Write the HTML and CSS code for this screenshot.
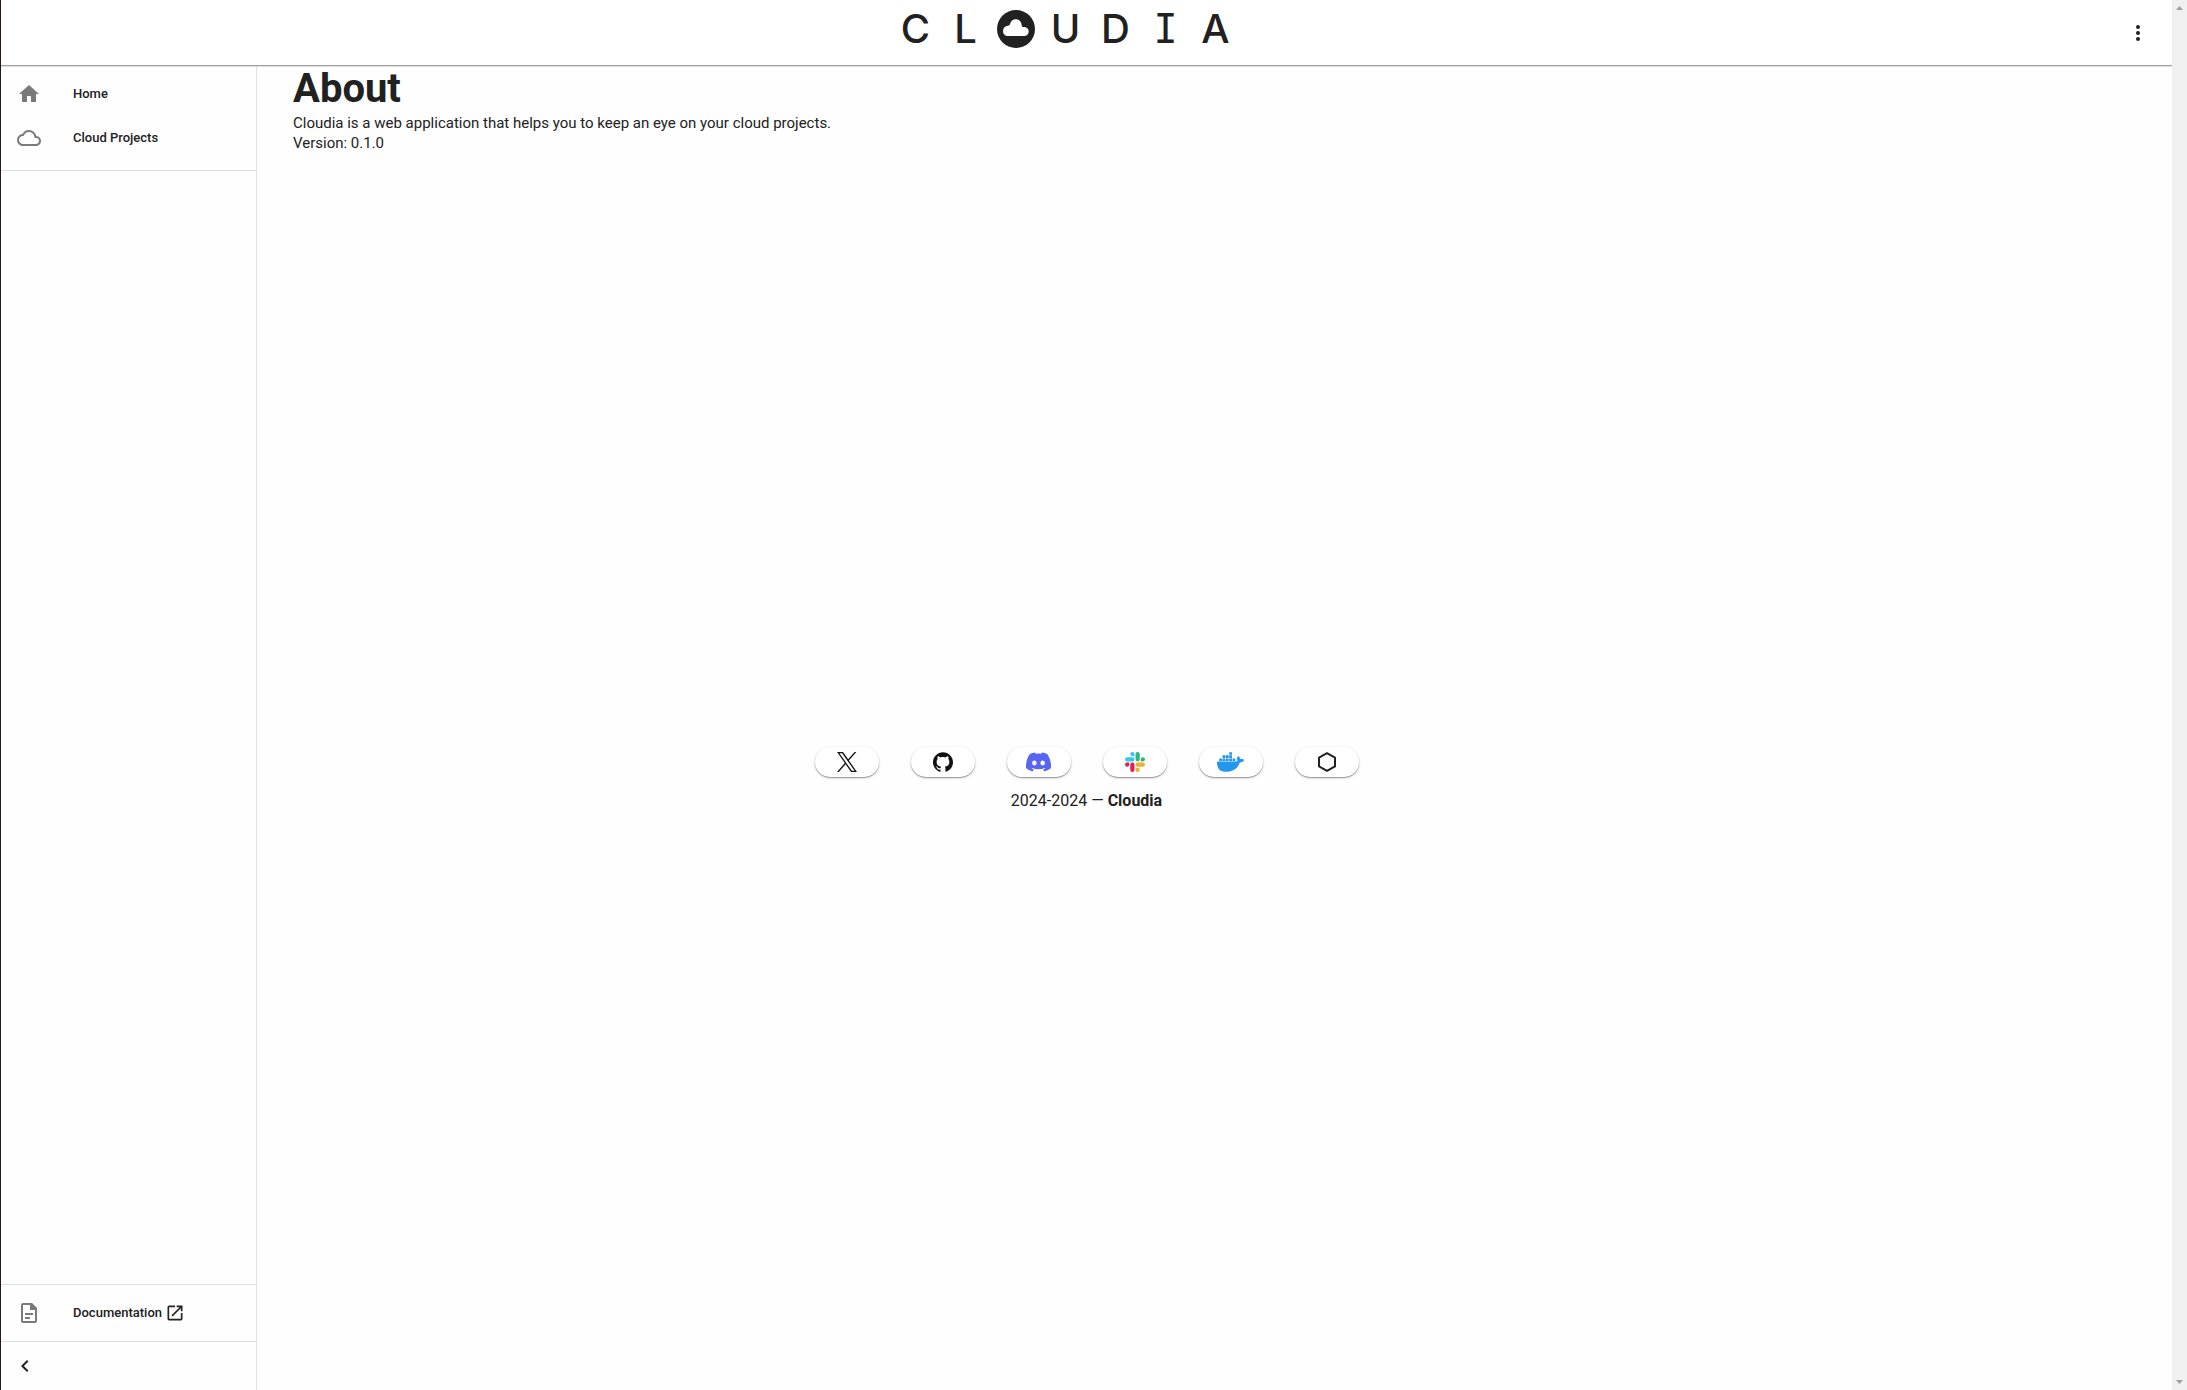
FILE: index.html
```html
<!DOCTYPE html>
<html lang="en">
<head>
<meta charset="utf-8">
<meta name="viewport" content="width=device-width, initial-scale=1">
<title>Cloudia - About</title>
<link rel="stylesheet" href="styles.css">
</head>
<body>
<div class="window">
  <div class="app">
    <header class="topbar">
      <a class="logo" href="#" aria-label="Cloudia">
        <span>C</span><span>L</span>
        <svg class="logo-cloud" viewBox="0 0 38 38" aria-hidden="true"><circle cx="19" cy="19" r="19" fill="#212121"/><path d="M10.500 26a4.800 4.800 0 0 1-4.500-5c0-3 2-5 5.500-5.500 1-.2 1.300-.6 1.500-1.500.8-3 3-4.800 5.700-4.800 3.300 0 5.800 2.400 6.100 6.300 0 1 .4 1.500 1.500 1.500 3.300 0 5.400 1.700 5.400 4.500 0 2.600-2 4.500-4.500 4.500z" fill="#fff"/></svg>
        <span>U</span><span>D</span><span class="logo-serif">I</span><span>A</span>
      </a>
      <button class="icon-button" type="button" aria-label="Menu">
        <svg viewBox="0 0 24 24" aria-hidden="true"><path d="M12 16a2 2 0 1 1 0 4 2 2 0 0 1 0-4m0-6a2 2 0 1 1 0 4 2 2 0 0 1 0-4m0-6a2 2 0 1 1 0 4 2 2 0 0 1 0-4"/></svg>
      </button>
    </header>

    <nav class="sidebar" aria-label="Main">
      <ul class="nav-list nav-main">
        <li><a class="nav-item" href="#"><svg class="nav-icon" viewBox="0 0 24 24" aria-hidden="true"><path d="M10 20v-6h4v6h5v-8h3L12 3 2 12h3v8z"/></svg><span>Home</span></a></li>
        <li><a class="nav-item" href="#"><svg class="nav-icon" viewBox="0 0 24 24" aria-hidden="true"><path d="M19.350 10.040A7.490 7.490 0 0 0 12 4C9.110 4 6.600 5.640 5.350 8.040A5.994 5.994 0 0 0 0 14c0 3.310 2.690 6 6 6h13c2.760 0 5-2.240 5-5 0-2.640-2.050-4.780-4.650-4.960M19 18H6c-2.210 0-4-1.790-4-4 0-2.050 1.530-3.760 3.560-3.970l1.070-.110.500-.950A5.469 5.469 0 0 1 12 6c2.620 0 4.880 1.860 5.390 4.430l.300 1.500 1.530.110A2.980 2.980 0 0 1 22 15c0 1.650-1.350 3-3 3"/></svg><span>Cloud Projects</span></a></li>
      </ul>
      <ul class="nav-list nav-docs">
        <li><a class="nav-item" href="#"><svg class="nav-icon" viewBox="0 0 24 24" aria-hidden="true"><path fill-rule="evenodd" d="M6 2h9l5 5v13a2 2 0 0 1-2 2H6a2 2 0 0 1-2-2V4a2 2 0 0 1 2-2zm0 2v16h12V9h-5V4zM8 12h8v2H8zm0 4h5v2H8z"/></svg><span>Documentation</span><svg class="external" viewBox="0 0 24 24" aria-hidden="true"><path d="M14 3v2h3.590l-9.830 9.830 1.410 1.410L19 6.410V10h2V3m-2 16H5V5h7V3H5a2 2 0 0 0-2 2v14a2 2 0 0 0 2 2h14a2 2 0 0 0 2-2v-7h-2z"/></svg></a></li>
      </ul>
      <div class="collapse">
        <button class="icon-button" type="button" aria-label="Collapse sidebar">
          <svg viewBox="0 0 24 24" aria-hidden="true"><path d="M15.410 16.580 10.830 12l4.580-4.590L14 6l-6 6 6 6z"/></svg>
        </button>
      </div>
    </nav>

    <main class="content">
      <h1>About</h1>
      <p>Cloudia is a web application that helps you to keep an eye on your cloud projects.</p>
      <p>Version: 0.1.0</p>
    </main>

    <footer class="footer">
      <div class="links">
        <a class="pill" href="#" aria-label="X"><svg viewBox="1 1 22 22" width="20" height="20" aria-hidden="true"><path d="M14.095 10.316 22.286 1h-1.940l-7.116 8.088L7.551 1H1l8.589 12.231L1 23h1.941l7.509-8.543L16.449 23H23zm-2.658 3.022-.872-1.218-6.925-9.688h2.982l5.590 7.821.868 1.219 7.265 10.166h-2.982z"/></svg></a>
        <a class="pill" href="#" aria-label="GitHub"><svg viewBox="0 0 24 24" width="20" height="20" aria-hidden="true"><path d="M12 .297c-6.630 0-12 5.373-12 12 0 5.303 3.438 9.800 8.205 11.385.6.113.82-.258.82-.577 0-.285-.01-1.040-.015-2.040-3.338.724-4.042-1.610-4.042-1.610C4.422 18.070 3.633 17.700 3.633 17.700c-1.087-.744.084-.729.084-.729 1.205.084 1.838 1.236 1.838 1.236 1.070 1.835 2.809 1.305 3.495.998.108-.776.417-1.305.76-1.605-2.665-.3-5.466-1.332-5.466-5.930 0-1.310.465-2.380 1.235-3.220-.135-.303-.54-1.523.105-3.176 0 0 1.005-.322 3.300 1.230.96-.267 1.980-.399 3-.405 1.020.006 2.040.138 3 .405 2.280-1.552 3.285-1.230 3.285-1.230.645 1.653.24 2.873.12 3.176.765.84 1.230 1.910 1.230 3.220 0 4.610-2.805 5.625-5.475 5.920.42.36.81 1.096.81 2.220 0 1.606-.015 2.896-.015 3.286 0 .315.21.69.825.57C20.565 22.092 24 17.592 24 12.297c0-6.627-5.373-12-12-12"/></svg></a>
        <a class="pill discord" href="#" aria-label="Discord"><svg viewBox="0 2.800 24 18.400" width="25" height="20" aria-hidden="true"><path d="M20.317 4.370a19.791 19.791 0 0 0-4.885-1.515.074.074 0 0 0-.079.037c-.211.375-.445.865-.608 1.249-1.845-.276-3.680-.276-5.487 0-.164-.393-.406-.874-.618-1.249a.077.077 0 0 0-.078-.037 19.736 19.736 0 0 0-4.885 1.515.070.070 0 0 0-.032.028C.533 9.046-.319 13.580.099 18.058a.082.082 0 0 0 .031.056c2.053 1.508 4.041 2.423 5.993 3.029a.078.078 0 0 0 .084-.028c.462-.630.873-1.295 1.226-1.994a.076.076 0 0 0-.042-.106c-.653-.248-1.274-.550-1.872-.892a.077.077 0 0 1-.008-.128c.126-.094.252-.192.372-.291a.074.074 0 0 1 .078-.010c3.928 1.793 8.180 1.793 12.061 0a.074.074 0 0 1 .079.009c.120.099.246.198.373.292a.077.077 0 0 1-.007.128 12.299 12.299 0 0 1-1.873.891.077.077 0 0 0-.041.107c.360.698.772 1.363 1.225 1.993a.076.076 0 0 0 .084.029c1.961-.607 3.950-1.522 6.002-3.029a.077.077 0 0 0 .031-.055c.500-5.177-.838-9.674-3.549-13.660a.061.061 0 0 0-.031-.029zM8.020 15.331c-1.183 0-2.157-1.086-2.157-2.419 0-1.333.956-2.419 2.157-2.419 1.211 0 2.176 1.095 2.157 2.419 0 1.333-.956 2.419-2.157 2.419zm7.975 0c-1.183 0-2.157-1.086-2.157-2.419 0-1.333.955-2.419 2.157-2.419 1.211 0 2.176 1.095 2.157 2.419 0 1.333-.946 2.419-2.157 2.419z"/></svg></a>
        <a class="pill" href="#" aria-label="Slack"><svg viewBox="0 0 24 24" width="20" height="20" aria-hidden="true"><path fill="#e01e5a" d="M5.042 15.165a2.528 2.528 0 0 1-2.520 2.523A2.528 2.528 0 0 1 0 15.165a2.527 2.527 0 0 1 2.522-2.520h2.520zm1.271 0a2.527 2.527 0 0 1 2.521-2.520 2.527 2.527 0 0 1 2.521 2.520v6.313A2.528 2.528 0 0 1 8.834 24a2.528 2.528 0 0 1-2.521-2.522z"/><path fill="#36c5f0" d="M8.834 5.042a2.528 2.528 0 0 1-2.521-2.520A2.528 2.528 0 0 1 8.834 0a2.528 2.528 0 0 1 2.521 2.522v2.520zm0 1.271a2.528 2.528 0 0 1 2.521 2.521 2.528 2.528 0 0 1-2.521 2.521H2.522A2.528 2.528 0 0 1 0 8.834a2.528 2.528 0 0 1 2.522-2.521z"/><path fill="#2eb67d" d="M18.956 8.834a2.528 2.528 0 0 1 2.522-2.521A2.528 2.528 0 0 1 24 8.834a2.528 2.528 0 0 1-2.522 2.521h-2.522zm-1.268 0a2.528 2.528 0 0 1-2.523 2.521 2.527 2.527 0 0 1-2.520-2.521V2.522A2.527 2.527 0 0 1 15.165 0a2.528 2.528 0 0 1 2.523 2.522z"/><path fill="#ecb22e" d="M15.165 18.956a2.528 2.528 0 0 1 2.523 2.522A2.528 2.528 0 0 1 15.165 24a2.527 2.527 0 0 1-2.520-2.522v-2.522zm0-1.268a2.527 2.527 0 0 1-2.520-2.523 2.526 2.526 0 0 1 2.520-2.520h6.313A2.527 2.527 0 0 1 24 15.165a2.528 2.528 0 0 1-2.522 2.523z"/></svg></a>
        <a class="pill docker" href="#" aria-label="Docker"><svg viewBox="0 3.300 24 17.400" width="27" height="20" aria-hidden="true"><path d="M13.800 8.820h2.490v2.260H13.800zM10.840 3.390h2.490v2.260h-2.490zM10.840 6.100h2.490v2.260h-2.490zM7.910 6.100h2.490v2.260H7.910zM4.950 6.100h2.490v2.260H4.950zM10.840 8.820h2.490v2.260h-2.490zM7.910 8.820h2.490v2.260H7.910zM4.950 8.820h2.490v2.260H4.950zM2.030 8.820h2.490v2.260H2.030zM23.763 9.890c-.065-.051-.672-.51-1.954-.51-.338.001-.676.03-1.010.087-.248-1.700-1.653-2.530-1.716-2.566l-.344-.199-.226.327c-.284.438-.49.922-.612 1.430-.23.97-.09 1.882.403 2.661-.595.332-1.550.413-1.744.42H.751a.751.751 0 0 0-.75.748 11.376 11.376 0 0 0 .692 4.062c.545 1.428 1.355 2.480 2.410 3.124 1.180.723 3.100 1.137 5.275 1.137.983.003 1.963-.086 2.930-.266a12.248 12.248 0 0 0 3.823-1.389c.98-.567 1.860-1.288 2.610-2.136 1.252-1.418 1.998-2.997 2.553-4.400h.221c1.372 0 2.215-.549 2.680-1.009.309-.293.55-.65.707-1.046l.098-.288z"/></svg></a>
        <a class="pill" href="#" aria-label="Packages"><svg viewBox="0 0 20 20" width="20" height="20" aria-hidden="true"><path d="M10 1.200 18 5.600v8.800l-8 4.400-8-4.400V5.600z" fill="none" stroke="#212121" stroke-width="2" stroke-linejoin="round"/></svg></a>
      </div>
      <div class="copyright">2024-2024 — <strong>Cloudia</strong></div>
    </footer>
  </div>
  <div class="scroll-track" aria-hidden="true">
    <svg viewBox="0 0 7 4" width="7" height="4"><path d="M0 4 3.500 0 7 4z"/></svg>
    <svg viewBox="0 0 7 4" width="7" height="4"><path d="M0 0h7L3.500 4z"/></svg>
  </div>
</div>
</body>
</html>
```
FILE: styles.css
```css
* {
  box-sizing: border-box;
}

body {
  margin: 0;
  background: #fefefe;
  color: #212121;
  font: 16px/24px Roboto, sans-serif;
}

a {
  color: inherit;
  text-decoration: none;
}

svg {
  display: block;
  fill: currentColor;
}

.window {
  display: flex;
  min-height: 100vh;
  border-left: 1px solid #2c1324;
}

.app {
  flex: 1;
  display: grid;
  grid-template-columns: 256px 1fr;
  grid-template-rows: 66px 1fr auto 1fr;
}

.topbar {
  grid-column: 1 / -1;
  display: flex;
  align-items: center;
  padding: 0 10px 0 16px;
  background: #fff;
  border-bottom: 1px solid #9e9e9e;
  box-shadow: 0 1px 1px rgba(0, 0, 0, 0.1);
  z-index: 1;
}

.logo {
  display: flex;
  margin: 0 auto;
  padding-bottom: 8px;
  align-items: center;
  font: 500 40px/48px Inter, sans-serif;
}

.logo > * {
  width: 50px;
  text-align: center;
}

.logo .logo-cloud {
  width: 38px;
  height: 38px;
  margin: 0 6px;
}

.logo .logo-serif {
  font-family: "DejaVu Sans Mono", monospace;
}

.icon-button {
  display: grid;
  place-items: center;
  width: 48px;
  height: 48px;
  padding: 0;
  border: 0;
  border-radius: 50%;
  background: none;
  color: #212121;
}

.icon-button svg {
  width: 24px;
  height: 24px;
}

.sidebar {
  grid-column: 1;
  grid-row: 2 / -1;
  display: flex;
  flex-direction: column;
  border-right: 1px solid #e0e0e0;
}

.nav-list {
  margin: 0;
  padding: 0;
  list-style: none;
}

.nav-main {
  padding: 6px 0 10px;
  border-bottom: 1px solid #e0e0e0;
}

.nav-docs {
  margin-top: auto;
  padding: 6px 0;
  border-top: 1px solid #e0e0e0;
  border-bottom: 1px solid #e0e0e0;
}

.nav-item {
  display: flex;
  align-items: center;
  height: 44px;
  padding-left: 16px;
  font-size: 13px;
  font-weight: 500;
}

.nav-icon {
  width: 24px;
  height: 24px;
  margin-right: 32px;
  color: #7a7a7a;
}

.external {
  width: 20px;
  height: 20px;
  margin-left: 3px;
}

.collapse {
  height: 48px;
}

.content {
  grid-column: 2;
  grid-row: 2;
  padding: 3px 36px;
}

h1 {
  margin: 0 0 4px;
  font-size: 40px;
  line-height: 40px;
}

p {
  margin: 0;
  font-size: 15px;
  line-height: 20px;
}

.footer {
  grid-column: 1 / -1;
  grid-row: 3;
  padding-top: 104px;
  text-align: center;
}

.links {
  display: flex;
  justify-content: center;
  gap: 32px;
  margin-bottom: 12px;
}

.pill {
  display: grid;
  place-items: center;
  width: 64px;
  height: 30px;
  border-radius: 15px;
  background: #fff;
  box-shadow: 0 1px 3px rgba(0, 0, 0, 0.2), 0 1px 1px rgba(0, 0, 0, 0.3);
  color: #111;
}

.discord {
  color: #5865f2;
}

.docker {
  color: #2396ed;
}

.scroll-track {
  display: flex;
  flex-direction: column;
  justify-content: space-between;
  align-items: center;
  width: 15px;
  padding: 6px 0;
  background: #f0f0f0;
  color: #a0a0a0;
}
```
